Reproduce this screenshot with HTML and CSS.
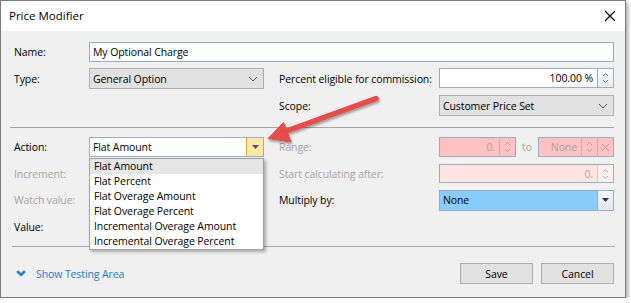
FILE: index.html
```html
<!DOCTYPE html>
<html>
<head>
<meta charset="utf-8">
<link rel="stylesheet" href="styles.css">
</head>
<body>
<div class="window">
  <div class="titlebar">
    <span class="title">Price Modifier</span>
    <svg class="close" width="12" height="12" viewBox="0 0 12 12"><path d="M1 1L11 11M11 1L1 11" stroke="#000" stroke-width="1.1"/></svg>
  </div>
  <div class="client">
    <div class="grid top">
      <div class="lbl">Name:</div>
      <div class="field name"><span class="txt">My Optional Charge</span></div>

      <div class="lbl">Type:</div>
      <div class="select r2"><span class="txt">General Option</span><svg class="chev" width="10" height="6" viewBox="0 0 10 6"><path d="M1 1L5 5L9 1" fill="none" stroke="#555" stroke-width="1"/></svg></div>
      <div class="lbl c4">Percent eligible for commission:</div>
      <div class="field spin c5"><span class="txt right">100.00 %</span><span class="spinbtn"><svg width="7" height="12" viewBox="0 0 7 12"><path d="M1 4L3.5 1.5L6 4M1 8L3.5 10.5L6 8" fill="none" stroke="#6a6a6a" stroke-width="1"/></svg></span></div>

      <div class="lbl c4">Scope:</div>
      <div class="select c5"><span class="txt">Customer Price Set</span><svg class="chev" width="10" height="6" viewBox="0 0 10 6"><path d="M1 1L5 5L9 1" fill="none" stroke="#555" stroke-width="1"/></svg></div>
    </div>
    <div class="sep sep1"></div>
    <div class="grid bottom">
      <div class="lbl">Action:</div>
      <div class="field combo"><span class="txt">Flat Amount</span><span class="combobtn"><svg width="7" height="4" viewBox="0 0 7 4"><path d="M0 0H7L3.5 4Z" fill="#4b5670"/></svg></span></div>
      <div class="lbl c4 dis">Range:</div>
      <div class="range c5">
        <div class="field spin pink r1"><span class="txt right dis">0.</span><span class="spinbtn"><svg width="7" height="12" viewBox="0 0 7 12"><path d="M1 4L3.5 1.5L6 4M1 8L3.5 10.5L6 8" fill="none" stroke="#b8a0a0" stroke-width="1"/></svg></span></div>
        <span class="to dis">to</span>
        <div class="field spin pink r2b"><span class="txt right dis">None</span><span class="spinbtn"><svg width="7" height="12" viewBox="0 0 7 12"><path d="M1 4L3.5 1.5L6 4M1 8L3.5 10.5L6 8" fill="none" stroke="#b8a0a0" stroke-width="1"/></svg></span><span class="spinbtn"><svg width="9" height="9" viewBox="0 0 9 9"><path d="M1 1L8 8M8 1L1 8" stroke="#a89a9a" stroke-width="1"/></svg></span></div>
      </div>

      <div class="lbl dis">Increment:</div>
      <div class="lbl c4 dis">Start calculating after:</div>
      <div class="field spin lightpink c5"><span class="txt right dis">0.</span><span class="spinbtn"><svg width="7" height="12" viewBox="0 0 7 12"><path d="M1 4L3.5 1.5L6 4M1 8L3.5 10.5L6 8" fill="none" stroke="#c0b0b0" stroke-width="1"/></svg></span></div>

      <div class="lbl dis">Watch value:</div>
      <div class="lbl c4">Multiply by:</div>
      <div class="field blue c5"><span class="txt">None</span><span class="dropbtn"><svg width="7" height="4" viewBox="0 0 7 4"><path d="M0 0H7L3.5 4Z" fill="#2f3548"/></svg></span></div>

      <div class="lbl">Value:</div>
    </div>
    <div class="sep sep2"></div>
    <div class="footer">
      <a class="link"><svg width="10" height="7" viewBox="0 0 10 7"><path d="M1.2 1.2L5 5L8.8 1.2" fill="none" stroke="#1e7fd8" stroke-width="2.6"/></svg><span>Show Testing Area</span></a>
      <div class="buttons">
        <div class="btn">Save</div>
        <div class="btn">Cancel</div>
      </div>
    </div>
  </div>

  <ul class="list">
    <li class="hl">Flat Amount</li>
    <li>Flat Percent</li>
    <li>Flat Overage Amount</li>
    <li>Flat Overage Percent</li>
    <li>Incremental Overage Amount</li>
    <li>Incremental Overage Percent</li>
  </ul>

  <svg class="arrow" width="631" height="303" viewBox="0 0 631 303">
    <defs>
      <filter id="sh" x="-20%" y="-20%" width="140%" height="160%">
        <feDropShadow dx="1" dy="2" stdDeviation="1.2" flood-color="#000" flood-opacity="0.35"/>
      </filter>
    </defs>
    <g filter="url(#sh)" fill="#e84b48" stroke="#e84b48">
      <line x1="376" y1="98.5" x2="288" y2="130.5" stroke-width="5.5" stroke-linecap="round"/>
      <path d="M268 138.5L283.5 122.5L291 142Z" stroke-width="1" stroke-linejoin="round"/>
    </g>
  </svg>
</div>
</body>
</html>
```
FILE: styles.css
```css
* { box-sizing: border-box; }
html, body { margin: 0; padding: 0; background: #fff; }
body {
  font-family: "Open Sans", "Noto Sans", sans-serif;
  font-size: 10.5px;
  letter-spacing: -0.1px;
  color: #000;
}
.window {
  position: relative;
  width: 626px;
  height: 298px;
  border: 1px solid #7d7d7d;
  background: #f0f0f0;
  box-shadow: 2px 2px 4px rgba(0,0,0,0.35);
}
.titlebar {
  height: 30px;
  background: #fff;
  display: flex;
  align-items: center;
  justify-content: space-between;
  padding: 0 9px 0 8px;
}
.title { font-size: 11.5px; line-height: 16px; letter-spacing: 0; }
.close { display: block; }
.client { padding: 11px 11px 0 13px; }

.grid {
  display: grid;
  grid-template-columns: 75px 175px 15px 160px 175px;
  align-items: center;
}
.grid.top { grid-template-rows: 20px 21px 21px; row-gap: 6px; }
.grid.bottom { grid-template-rows: 20px 19px 20px 19px; row-gap: 7px; }
.lbl { grid-column: 1; white-space: nowrap; line-height: 14px; }
.c4 { grid-column: 4; }
.c5 { grid-column: 5; }
.dis { color: #a3a3a3; }

.field {
  height: 20px;
  border: 1px solid #9aabc4;
  background: #fff;
  display: flex;
  align-items: center;
  overflow: hidden;
}
.field .txt, .select .txt { padding-left: 3px; flex: 1; white-space: nowrap; line-height: 14px; }
.txt.right { text-align: right; padding-left: 0; padding-right: 4px; }
.name { grid-column: 2 / 6; }
.select {
  height: 21px;
  border: 1px solid #adadad;
  background: #e1e1e1;
  display: flex;
  align-items: center;
  padding-right: 5px;
}
.select .chev { display: block; }
.r2 { grid-column: 2; }
.spin { align-self: start; }
.grid.bottom .spin { align-self: stretch; height: auto; }
.spinbtn {
  width: 16px;
  align-self: stretch;
  border-left: 1px solid #9aabc4;
  display: flex;
  align-items: center;
  justify-content: center;
  background: linear-gradient(#fbfcfe, #e9eef6);
}
.spinbtn svg { display: block; }
.pink { background: #ffc1c1; }
.pink .spinbtn { background: #ffc1c1; border-left-color: #c8b0b8; }
.lightpink { background: #ffe4e1; }
.lightpink .spinbtn { background: #fff1ef; border-left-color: #d6c8cc; }

.combo { grid-column: 2; }
.combobtn {
  width: 17px;
  align-self: stretch;
  background: #fde8a6;
  border-left: 1px solid #e0a44c;
  display: flex;
  align-items: center;
  justify-content: center;
}
.combobtn svg, .dropbtn svg { display: block; }

.range { display: flex; align-items: center; height: 20px; }
.range .field { height: 20px; }
.range .r1 { width: 77px; }
.range .r2b { width: 76px; margin-left: auto; }
.to { margin-left: 6px; line-height: 14px; }

.blue { background: #88cdf9; height: 21px; }
.dropbtn {
  width: 16px;
  align-self: stretch;
  border-left: 1px solid #9aabc4;
  background: linear-gradient(#f4f7fb, #dde5f0);
  display: flex;
  align-items: center;
  justify-content: center;
}

.sep { height: 1px; background: #a5a5a5; }
.sep1 { margin: 11px 0 9px -4px; }
.sep2 { margin: 10px -1px 0 -2px; }

.footer {
  display: flex;
  align-items: center;
  justify-content: space-between;
  margin-top: 16px;
  height: 21px;
}
.link {
  display: flex;
  align-items: center;
  color: #1e77d3;
  margin-left: 2px;
  gap: 10px;
}
.link svg { display: block; }
.buttons { display: flex; gap: 8px; }
.btn {
  width: 73px;
  height: 21px;
  border: 1px solid #adadad;
  background: #e1e1e1;
  display: flex;
  align-items: center;
  justify-content: center;
  line-height: 14px;
}

.list {
  position: absolute;
  left: 88px;
  top: 157px;
  width: 175px;
  margin: 0;
  padding: 0;
  list-style: none;
  background: #fff;
  border: 1px solid #a0a0a0;
  box-shadow: 2px 2px 3px rgba(0,0,0,0.3);
}
.list li {
  height: 15px;
  line-height: 15px;
  padding-left: 4px;
  white-space: nowrap;
}
.list li.hl { background: #e5e5e5; }

.arrow {
  position: absolute;
  left: -1px;
  top: -1px;
  pointer-events: none;
}
```
